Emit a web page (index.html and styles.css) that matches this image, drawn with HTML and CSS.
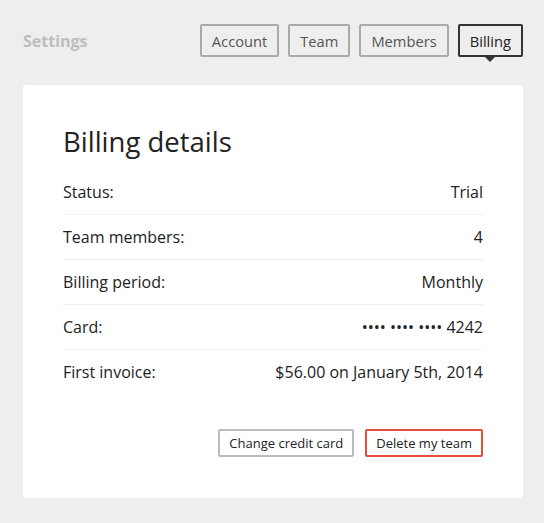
FILE: index.html
```html
<!DOCTYPE html>
<html>
<head>
<meta charset="utf-8">
<link rel="stylesheet" href="styles.css">
</head>
<body>
<div class="page">
  <header class="topbar">
    <div class="title">Settings</div>
    <nav class="tabs">
      <a class="tab">Account</a>
      <a class="tab">Team</a>
      <a class="tab">Members</a>
      <a class="tab active">Billing</a>
    </nav>
  </header>
  <section class="card">
    <h1 class="heading">Billing details</h1>
    <div class="rows">
      <div class="row"><span>Status:</span><span>Trial</span></div>
      <div class="row"><span>Team members:</span><span>4</span></div>
      <div class="row"><span>Billing period:</span><span>Monthly</span></div>
      <div class="row"><span>Card:</span><span>•••• •••• •••• 4242</span></div>
      <div class="row"><span>First invoice:</span><span>$56.00 on January 5th, 2014</span></div>
    </div>
    <div class="actions">
      <button class="btn">Change credit card</button>
      <button class="btn danger">Delete my team</button>
    </div>
  </section>
</div>
</body>
</html>
```
FILE: styles.css
```css
html, body {
  margin: 0;
  padding: 0;
  background: #eeeeee;
  font-family: "Open Sans", "Liberation Sans", sans-serif;
  color: #222;
}
.page {
  width: 544px;
  padding: 24px 21px 0 23px;
  box-sizing: border-box;
}
.topbar {
  display: flex;
  justify-content: space-between;
  align-items: center;
}
.title {
  font-size: 16px;
  font-weight: 700;
  color: #bdbdbd;
  line-height: 22px;
}
.tabs {
  display: flex;
  gap: 9px;
}
.tab {
  position: relative;
  display: flex;
  align-items: center;
  height: 33px;
  box-sizing: border-box;
  padding: 0 10px;
  border: 2px solid #aaaaaa;
  border-radius: 2px;
  font-size: 14.7px;
  color: #555;
  line-height: 20px;
}
.tab.active {
  border-color: #333;
  color: #222;
}
.tab.active::after {
  content: "";
  position: absolute;
  left: 50%;
  top: 100%;
  margin-left: -5px;
  margin-top: 2px;
  border-left: 5px solid transparent;
  border-right: 5px solid transparent;
  border-top: 5px solid #333;
}
.card {
  margin-top: 28px;
  width: 500px;
  box-sizing: border-box;
  background: #fff;
  border-radius: 3px;
  padding: 39px 40px 41px;
}
.heading {
  margin: 0 0 10px;
  font-size: 27.5px;
  line-height: 36px;
  font-weight: 400;
  color: #222;
}
.row {
  display: flex;
  justify-content: space-between;
  padding: 11px 0;
  font-size: 16px;
  line-height: 22px;
  border-bottom: 1px solid #eeeeee;
}
.row:last-child {
  border-bottom: none;
}
.actions {
  display: flex;
  justify-content: flex-end;
  gap: 11px;
  margin-top: 35px;
}
.btn {
  height: 28px;
  box-sizing: border-box;
  padding: 0 9px;
  background: #fff;
  border: 2px solid #bbbbbb;
  border-radius: 2px;
  font-family: "Open Sans", "Liberation Sans", sans-serif;
  font-size: 13px;
  color: #222;
  line-height: 20px;
}
.btn.danger {
  border-color: #e74c3c;
}
```
